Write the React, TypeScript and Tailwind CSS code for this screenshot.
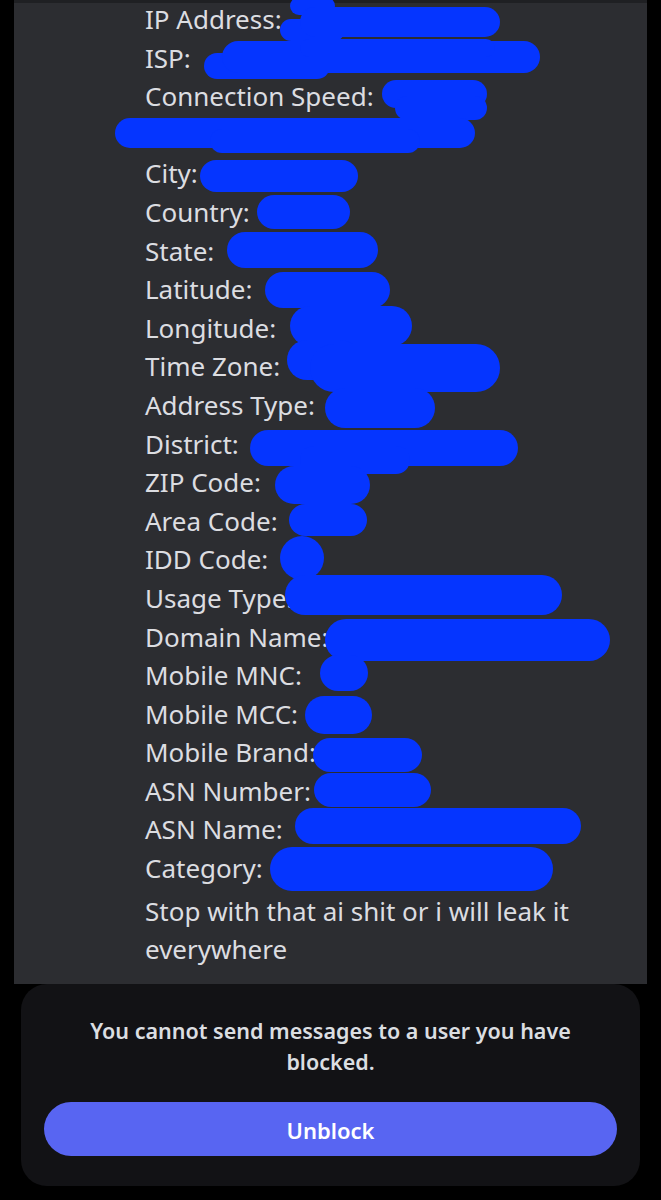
const labels = [
  'IP Address:',
  'ISP:',
  'Connection Speed:',
  '',
  'City:',
  'Country:',
  'State:',
  'Latitude:',
  'Longitude:',
  'Time Zone:',
  'Address Type:',
  'District:',
  'ZIP Code:',
  'Area Code:',
  'IDD Code:',
  'Usage Type:',
  'Domain Name:',
  'Mobile MNC:',
  'Mobile MCC:',
  'Mobile Brand:',
  'ASN Number:',
  'ASN Name:',
  'Category:',
]

// scribbles over the values: [x1, x2, centerY, thickness]
const blobs: [number, number, number, number][] = [
  [290, 335, 6, 18],
  [280, 345, 30, 22],
  [300, 500, 22, 30],
  [204, 330, 66, 26],
  [222, 540, 57, 32],
  [300, 495, 48, 18],
  [382, 487, 94, 28],
  [395, 487, 108, 24],
  [115, 475, 133, 30],
  [210, 420, 141, 24],
  [200, 358, 176, 32],
  [257, 350, 212, 34],
  [227, 378, 250, 36],
  [265, 390, 290, 36],
  [290, 412, 326, 40],
  [287, 360, 360, 40],
  [310, 500, 368, 48],
  [325, 435, 408, 40],
  [250, 518, 448, 36],
  [300, 410, 460, 28],
  [275, 370, 485, 38],
  [289, 367, 520, 32],
  [280, 323, 558, 44],
  [285, 562, 595, 40],
  [325, 610, 640, 42],
  [320, 368, 673, 36],
  [305, 372, 715, 38],
  [313, 422, 755, 34],
  [314, 431, 790, 34],
  [295, 581, 826, 36],
  [270, 553, 869, 44],
]

const Scribbles = () => {
  return (
    <svg className="pointer-events-none absolute left-0 top-0" width={661} height={990} viewBox="0 0 661 990">
      {blobs.map(([x1, x2, cy, t], i) => (
        <rect key={i} x={x1} y={cy - t / 2} width={Math.max(x2 - x1, t)} height={t} rx={t / 2} fill="#0535ff" />
      ))}
    </svg>
  )
}

const App = () => {
  return (
    <div className="relative h-[1200px] w-[661px] overflow-hidden bg-black" style={{ fontFamily: '"Noto Sans", sans-serif' }}>
      <div className="mx-[14px] h-[984px] border-t-[3px] border-[#1f2023] bg-[#2c2d31] pl-[131px] pr-4">
        <div className="-mt-[3px] text-[26px] leading-[38.6px] text-[#dcdde1]">
          {labels.map((label, i) => (
            <div key={i} className="h-[38.6px] whitespace-nowrap">
              {label}
            </div>
          ))}
          <div className="mt-[4px]">
            Stop with that ai shit or i will leak it everywhere
          </div>
        </div>
      </div>
      <Scribbles />
      <div className="mx-[21px] flex h-[202px] flex-col rounded-[26px] bg-[#121215] px-[23px] pt-[31px]">
        <p className="mx-auto max-w-[500px] text-center text-[21.5px] font-semibold leading-[31px] text-[#dbdee1]">
          You cannot send messages to a user you have blocked.
        </p>
        <button className="mt-[25px] flex h-[54px] w-full items-center justify-center rounded-full bg-[#5865f2] pt-[3px] text-[22px] font-semibold text-white">
          Unblock
        </button>
      </div>
    </div>
  )
}

export default App
